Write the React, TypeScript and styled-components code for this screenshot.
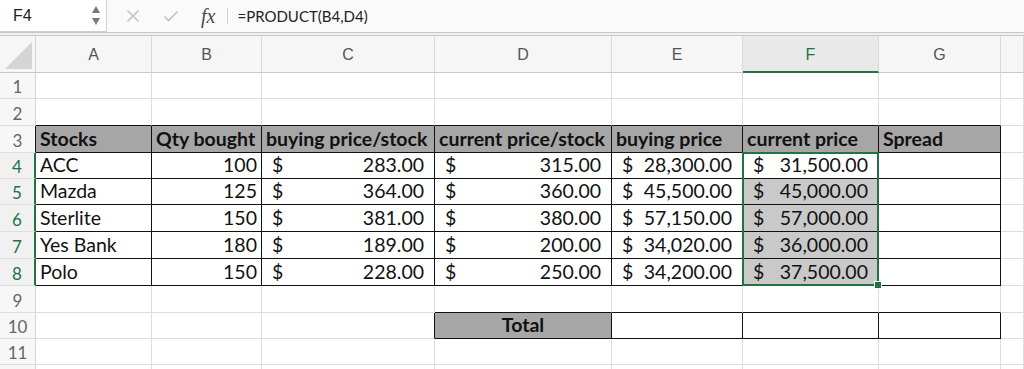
import React from 'react';
import styled, { createGlobalStyle } from 'styled-components';

const GlobalStyle = createGlobalStyle`
  html, body {
    margin: 0;
    padding: 0;
    background: #ffffff;
    overflow: hidden;
  }
  body {
    font-family: Lato, "Liberation Sans", sans-serif;
  }
`;

// 列宽：行号列 + A..G + H（剩余，只露出左边一截）
const COL_WIDTHS = [36, 116, 110, 173, 177, 131, 136, 122];
const ROW_HEIGHTS = [26, 27, 27, 26, 26, 27, 27, 27, 27, 26, 26, 26];
const LETTERS = ['A', 'B', 'C', 'D', 'E', 'F', 'G', ''];

const GREEN = '#217346';
const GRID_LINE = '#dcdcdc';
const INK = '#111111';

type Align = 'left' | 'right' | 'center';

interface CellSpec {
  text?: string;
  money?: string;
  align?: Align;
  bold?: boolean;
  fill?: string;
}

const STOCKS = [
  ['ACC', '100', '283.00', '315.00', '28,300.00', '31,500.00'],
  ['Mazda', '125', '364.00', '360.00', '45,500.00', '45,000.00'],
  ['Sterlite', '150', '381.00', '380.00', '57,150.00', '57,000.00'],
  ['Yes Bank', '180', '189.00', '200.00', '34,020.00', '36,000.00'],
  ['Polo', '150', '228.00', '250.00', '34,200.00', '37,500.00'],
];

const HEADER_FILL = '#a6a6a6';
const SELECT_FILL = '#c9c9c9';

// 单元格内容表，key = `${row}-${col}`，col 1 = A
const buildCells = () => {
  const cells: Record<string, CellSpec> = {};
  const heads = ['Stocks', 'Qty bought', 'buying price/stock', 'current price/stock', 'buying price', 'current price', 'Spread'];
  heads.forEach((h, i) => {
    cells[`3-${i + 1}`] = { text: h, bold: true, fill: HEADER_FILL };
  });
  STOCKS.forEach((s, i) => {
    const r = 4 + i;
    cells[`${r}-1`] = { text: s[0] };
    cells[`${r}-2`] = { text: s[1], align: 'right' };
    cells[`${r}-3`] = { money: s[2] };
    cells[`${r}-4`] = { money: s[3] };
    cells[`${r}-5`] = { money: s[4] };
    cells[`${r}-6`] = { money: s[5], fill: r === 4 ? undefined : SELECT_FILL };
  });
  cells['10-4'] = { text: 'Total', bold: true, align: 'center', fill: HEADER_FILL };
  return cells;
};

const CELLS = buildCells();

const inBox = (r: number, c: number) =>
  (r >= 3 && r <= 8 && c >= 1 && c <= 7) || (r === 10 && c >= 4 && c <= 7);

const Page = styled.div`
  width: 1024px;
  height: 369px;
  overflow: hidden;
  background: #ffffff;
`;

const FormulaBar = styled.div`
  display: flex;
  align-items: center;
  height: 32px;
  background: #fafafa;
`;

const NameBox = styled.div`
  box-sizing: border-box;
  width: 107px;
  height: 32px;
  display: flex;
  align-items: center;
  justify-content: space-between;
  padding: 0 6px 0 13px;
  background: #ffffff;
  border-right: 1px solid #cfcfcf;
  border-bottom: 1px solid #cfcfcf;
  font-family: "Liberation Sans", sans-serif;
  font-size: 16px;
  color: #222;
`;

const Spinner = styled.div`
  display: flex;
  flex-direction: column;
  gap: 5px;
`;

const Arrow = styled.div<{ $up?: boolean }>`
  width: 0;
  height: 0;
  border-left: 4.5px solid transparent;
  border-right: 4.5px solid transparent;
  ${p => (p.$up ? 'border-bottom: 7px solid #7a7a7a;' : 'border-top: 7px solid #7a7a7a;')}
`;

const BarIcons = styled.div`
  display: flex;
  align-items: center;
  gap: 23px;
  margin-left: 19px;
`;

const Fx = styled.span`
  font-family: "Liberation Serif", serif;
  font-style: italic;
  font-size: 20px;
  color: #4a4a4a;
  margin-left: -1px;
`;

const BarDivider = styled.div`
  width: 1px;
  height: 16px;
  background: #cfcfcf;
  margin-left: 12px;
`;

const FormulaText = styled.div`
  margin-left: 9px;
  font-family: Lato, "Liberation Sans", sans-serif;
  font-size: 15px;
  color: #222;
`;

const Separator = styled.div`
  height: 2px;
  border-top: 1px solid #c9c9c9;
  border-bottom: 1px solid #c9c9c9;
  background: #f0f0f0;
`;

const Sheet = styled.div`
  display: grid;
  grid-template-columns: ${COL_WIDTHS.map(w => `${w}px`).join(' ')} 1fr;
  grid-template-rows: 37px ${ROW_HEIGHTS.map(h => `${h}px`).join(' ')};
`;

const Corner = styled.div`
  grid-row: 1;
  grid-column: 1;
  box-sizing: border-box;
  background: #f6f6f6;
  border-right: 1px solid #d4d4d4;
  border-bottom: 1px solid #c8c8c8;
  display: flex;
  align-items: flex-end;
  justify-content: flex-end;
  padding: 0 3px 3px 0;
`;

const ColHead = styled.div<{ $active?: boolean; $c: number }>`
  grid-row: 1;
  grid-column: ${p => p.$c + 1};
  box-sizing: border-box;
  display: flex;
  align-items: center;
  justify-content: center;
  background: ${p => (p.$active ? '#e9e9e9' : '#f6f6f6')};
  border-right: 1px solid #d9d9d9;
  border-bottom: ${p => (p.$active ? `2px solid ${GREEN}` : '1px solid #c8c8c8')};
  font-family: "Liberation Sans", sans-serif;
  font-size: 16px;
  color: ${p => (p.$active ? GREEN : '#555')};
  padding-top: 2px;
`;

const RowHead = styled.div<{ $active?: boolean; $edge: string; $r: number }>`
  grid-row: ${p => p.$r + 1};
  grid-column: 1;
  box-sizing: border-box;
  display: flex;
  align-items: center;
  justify-content: center;
  background: ${p => (p.$active ? '#f1f1f1' : '#f7f7f7')};
  border-right: ${p => (p.$active ? `2px solid ${GREEN}` : `1px solid ${p.$edge}`)};
  border-bottom: 1px solid #dedede;
  font-family: Lato, "Liberation Sans", sans-serif;
  font-size: 17px;
  color: ${p => (p.$active ? GREEN : '#666')};
  padding-top: 2px;
`;

const Cell = styled.div<{
  $r: number;
  $c: number;
  $right: string;
  $bottom: string;
  $fill?: string;
  $bold?: boolean;
  $align?: Align;
}>`
  grid-row: ${p => p.$r + 1};
  grid-column: ${p => p.$c + 1};
  box-sizing: border-box;
  display: flex;
  align-items: flex-end;
  justify-content: ${p => (p.$align === 'right' ? 'flex-end' : p.$align === 'center' ? 'center' : 'flex-start')};
  padding: 0 4px 2px 4px;
  background: ${p => p.$fill || '#ffffff'};
  border-right: 1px solid ${p => p.$right};
  border-bottom: 1px solid ${p => p.$bottom};
  font-size: 19.5px;
  line-height: 23px;
  font-weight: ${p => (p.$bold ? 700 : 400)};
  color: ${INK};
  white-space: nowrap;
  overflow: hidden;
`;

const Money = styled.div`
  flex: 1;
  display: flex;
  justify-content: space-between;
  padding: 0 6px 0 6px;
`;

const Selection = styled.div`
  grid-column: 7;
  grid-row: 5 / 10;
  position: relative;
  margin: -1px 0 0 -1px;
  border: 2px solid ${GREEN};
  pointer-events: none;
  z-index: 2;
`;

const FillHandle = styled.div`
  position: absolute;
  right: -5px;
  bottom: -5px;
  width: 6px;
  height: 6px;
  background: ${GREEN};
  border: 1px solid #ffffff;
`;

const CrossIcon = () => (
  <svg width="14" height="14" viewBox="0 0 14 14">
    <path d="M1.5 1.5 L12.5 12.5 M12.5 1.5 L1.5 12.5" stroke="#c3c3c3" strokeWidth="1.6" fill="none" />
  </svg>
);

const CheckIcon = () => (
  <svg width="16" height="14" viewBox="0 0 16 14">
    <path d="M1.5 7.5 L5.5 11.5 L14.5 2.5" stroke="#c3c3c3" strokeWidth="1.6" fill="none" />
  </svg>
);

const CornerTriangle = () => (
  <svg width="27" height="27" viewBox="0 0 27 27">
    <polygon points="27,0 27,27 0,27" fill="#d4d4d4" />
  </svg>
);

const App = () => {
  const renderRow = (r: number) => {
    const active = r >= 4 && r <= 8;
    // 第 12 行只露出顶部几像素，行号看不到
    const label = r <= 11 ? r : '';
    const out: React.ReactNode[] = [
      <RowHead key={`h-${r}`} $r={r} $active={active} $edge={inBox(r, 1) ? INK : '#d4d4d4'}>
        {label}
      </RowHead>,
    ];
    for (let c = 1; c <= 8; c++) {
      const spec = CELLS[`${r}-${c}`] || {};
      const right = inBox(r, c) || inBox(r, c + 1) ? INK : GRID_LINE;
      const bottom = inBox(r, c) || inBox(r + 1, c) ? INK : GRID_LINE;
      out.push(
        <Cell
          key={`${r}-${c}`}
          $r={r}
          $c={c}
          $right={right}
          $bottom={bottom}
          $fill={spec.fill}
          $bold={spec.bold}
          $align={spec.align}
        >
          {spec.money ? (
            <Money>
              <span>$</span>
              <span>{spec.money}</span>
            </Money>
          ) : (
            spec.text
          )}
        </Cell>
      );
    }
    return out;
  };

  return (
    <Page>
      <GlobalStyle />
      <FormulaBar>
        <NameBox>
          <span>F4</span>
          <Spinner>
            <Arrow $up />
            <Arrow />
          </Spinner>
        </NameBox>
        <BarIcons>
          <CrossIcon />
          <CheckIcon />
          <Fx>fx</Fx>
        </BarIcons>
        <BarDivider />
        <FormulaText>=PRODUCT(B4,D4)</FormulaText>
      </FormulaBar>
      <Separator />
      <Sheet>
        <Corner>
          <CornerTriangle />
        </Corner>
        {LETTERS.map((l, i) => (
          <ColHead key={`col-${i}`} $c={i + 1} $active={l === 'F'}>
            {l}
          </ColHead>
        ))}
        {ROW_HEIGHTS.map((_, i) => renderRow(i + 1))}
        <Selection>
          <FillHandle />
        </Selection>
      </Sheet>
    </Page>
  );
};

export default App;
